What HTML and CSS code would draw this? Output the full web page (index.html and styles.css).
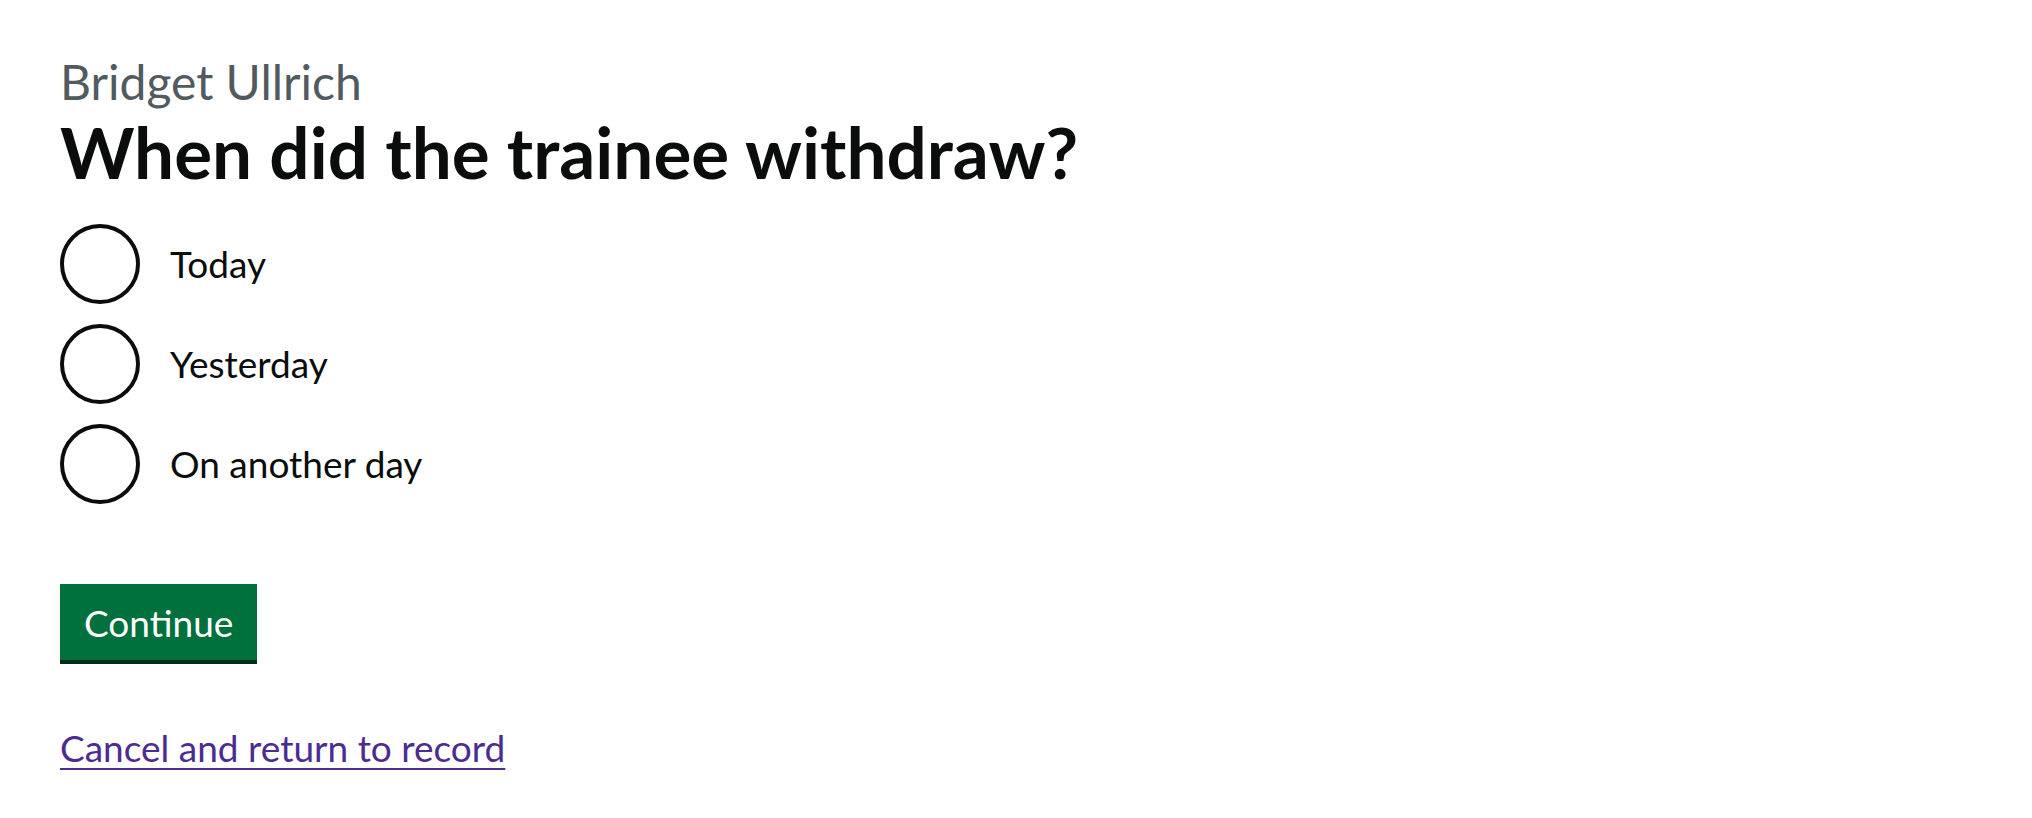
FILE: index.html
```html
<!DOCTYPE html>
<html lang="en">
<head>
<meta charset="utf-8">
<title>When did the trainee withdraw?</title>
<link rel="stylesheet" href="styles.css">
</head>
<body>
<main class="page">
  <form class="form" action="#" novalidate>
    <div class="form-group">
      <fieldset class="fieldset">
        <legend class="legend">
          <span class="caption">Bridget Ullrich</span>
          <h1 class="heading">When did the trainee withdraw?</h1>
        </legend>
        <div class="radios">
          <div class="radio-item">
            <input class="radio-input" id="date-today" name="date" type="radio" value="today">
            <label class="radio-label" for="date-today">Today</label>
          </div>
          <div class="radio-item">
            <input class="radio-input" id="date-yesterday" name="date" type="radio" value="yesterday">
            <label class="radio-label" for="date-yesterday">Yesterday</label>
          </div>
          <div class="radio-item">
            <input class="radio-input" id="date-other" name="date" type="radio" value="other">
            <label class="radio-label" for="date-other">On another day</label>
          </div>
        </div>
      </fieldset>
    </div>
    <button class="button" type="submit">Continue</button>
  </form>
  <p class="cancel"><a class="link" href="#">Cancel and return to record</a></p>
</main>
</body>
</html>
```
FILE: styles.css
```css
html, body {
  margin: 0;
  padding: 0;
  background: #ffffff;
}

body {
  font-family: Lato, "Liberation Sans", Arial, sans-serif;
  color: #0b0c0c;
  -webkit-font-smoothing: antialiased;
}

.page {
  display: flex;
  flex-direction: column;
  align-items: flex-start;
  padding: 52px 60px 0;
}

.form {
  display: flex;
  flex-direction: column;
  align-items: flex-start;
}

.form-group {
  margin-bottom: 80px;
}

.fieldset {
  margin: 0;
  padding: 0;
  border: 0;
  min-width: 0;
}

.legend {
  display: flex;
  flex-direction: column;
  padding: 0;
  margin: 0 0 32px;
}

.caption {
  display: block;
  font-size: 48px;
  line-height: 60px;
  font-weight: 400;
  color: #505a5f;
}

.heading {
  margin: 0;
  font-size: 71px;
  line-height: 80px;
  font-weight: 700;
  color: #0b0c0c;
}

.radios {
  display: flex;
  flex-direction: column;
  gap: 20px;
}

.radio-item {
  display: flex;
  align-items: center;
  min-height: 80px;
}

.radio-input {
  appearance: none;
  -webkit-appearance: none;
  box-sizing: border-box;
  flex: none;
  width: 80px;
  height: 80px;
  margin: 0;
  border: 4px solid #0b0c0c;
  border-radius: 50%;
  background: #ffffff;
  cursor: pointer;
}

.radio-label {
  padding-left: 30px;
  font-size: 37px;
  line-height: 50px;
  color: #0b0c0c;
  cursor: pointer;
}

.button {
  box-sizing: border-box;
  margin: 0 0 63px;
  padding: 16px 20px 14px;
  border: 4px solid transparent;
  border-radius: 0;
  background: #00703c;
  box-shadow: 0 4px 0 #002d18;
  color: #ffffff;
  font-family: inherit;
  font-size: 37px;
  line-height: 38px;
  font-weight: 400;
  cursor: pointer;
}

.cancel {
  margin: 0;
  font-size: 37px;
  line-height: 50px;
}

.link {
  color: #4c2c92;
  text-decoration: underline;
  text-decoration-thickness: 2px;
  text-underline-offset: 0.16em;
}
```
